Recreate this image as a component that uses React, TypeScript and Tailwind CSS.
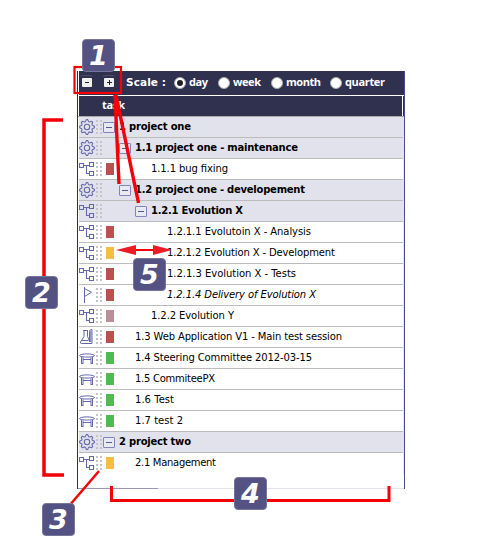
import React from 'react';

type Kind = 'gear' | 'tree' | 'flag' | 'test' | 'table';
type Row = { kind: Kind; level: number; text: string; color?: string; italic?: boolean; width: number };

const RED = '#bb5050';
const GREEN = '#50bb50';
const AMBER = '#f6bd43';

const rows: Row[] = [
  { kind: 'gear', level: 0, text: '1 project one', width: 72 },
  { kind: 'gear', level: 1, text: '1.1 project one - maintenance', width: 163 },
  { kind: 'tree', level: 2, text: '1.1.1 bug fixing', color: RED, width: 77 },
  { kind: 'gear', level: 1, text: '1.2 project one - developement', width: 170 },
  { kind: 'tree', level: 2, text: '1.2.1 Evolution X', width: 92 },
  { kind: 'tree', level: 3, text: '1.2.1.1 Evolutoin X - Analysis', color: RED, width: 144 },
  { kind: 'tree', level: 3, text: '1.2.1.2 Evolution X - Development', color: AMBER, width: 168 },
  { kind: 'tree', level: 3, text: '1.2.1.3 Evolution X - Tests', color: RED, width: 129 },
  { kind: 'flag', level: 3, text: '1.2.1.4 Delivery of Evolution X', color: RED, italic: true, width: 149 },
  { kind: 'tree', level: 2, text: '1.2.2 Evolution Y', color: '#bb9098', width: 83 },
  { kind: 'test', level: 1, text: '1.3 Web Application V1 - Main test session', color: RED, width: 207 },
  { kind: 'table', level: 1, text: '1.4 Steering Committee 2012-03-15', color: GREEN, width: 177 },
  { kind: 'table', level: 1, text: '1.5 CommiteePX', color: GREEN, width: 80 },
  { kind: 'table', level: 1, text: '1.6 Test', color: GREEN, width: 39 },
  { kind: 'table', level: 1, text: '1.7 test 2', color: GREEN, width: 48 },
  { kind: 'gear', level: 0, text: '2 project two', width: 72 },
  { kind: 'tree', level: 1, text: '2.1 Management', color: AMBER, width: 81 },
];

// Horizontal space between the drag handle and the label or its toggle.
const groupIndent = ['-ml-px', 'ml-[15px]', 'ml-[31px]', 'ml-[47px]'];
const leafIndent = ['ml-[5px]', 'ml-[21px]', 'ml-[37px]', 'ml-[53px]'];

const gearPoints = Array.from({ length: 32 }, (_, i) => {
  const r = i % 4 < 2 ? 7.4 : 5.6;
  const a = ((i - 0.5) * Math.PI) / 16 - Math.PI / 2;
  return `${(8 + r * Math.cos(a)).toFixed(2)},${(8 + r * Math.sin(a)).toFixed(2)}`;
}).join(' ');

function KindIcon({ kind }: { kind: Kind }) {
  return (
    <svg className="size-4 shrink-0" viewBox="0 0 16 16" fill="none" stroke="#6668ad" strokeWidth="1">
      {kind === 'gear' && (
        <>
          <polygon points={gearPoints} strokeLinejoin="round" strokeWidth="1.1" />
          <circle cx="8" cy="8" r="2.7" strokeWidth="1.1" />
        </>
      )}
      {kind === 'tree' && (
        <path strokeWidth="1.1" d="M.5 2.500h4v4h-4zM10.500 1.500h4v4h-4zM10.500 10.500h4v4h-4zM5 4.500h5.500M7.500 4.500v8h3" />
      )}
      {kind === 'flag' && <path d="M5.500 0v16M5.500 1.500l7 3.800-7 4.200" />}
      {kind === 'test' && (
        <path d="M4 1.500h5M5 1.500v6l-3.500 5.500q-.5 1.500 1 1.500h10.500M8.500 1.500v6l2.500 5.500M3 11.500h6.500M10.500 13V2.500q0-2 2.500-2v14M11.800 2v11" />
      )}
      {kind === 'table' && (
        <path d="M.5 5.700c0-2.400 15-2.400 15 0 0 1.800-15 1.800-15 0zM2.500 7v7M4 7.500v6.500M13.500 7v7M12 7.500v6.500M4 9.500h8M2.500 13.500h1.500M12 13.500h1.500" />
      )}
    </svg>
  );
}

function Grip() {
  return (
    <svg className="ml-px h-5 w-2 shrink-0" viewBox="0 0 8 20" fill="#c5c5c9">
      {[3, 7, 11, 15].map((y) => (
        <g key={y}>
          <rect x="0" y={y} width="2" height="2" />
          <rect x="4" y={y} width="2" height="2" />
        </g>
      ))}
    </svg>
  );
}

function Label({ text, width, className = '' }: { text: string; width: number; className?: string }) {
  return (
    <svg className={`h-5 shrink-0 overflow-visible ${className}`} width={width} height="20">
      <text x="0" y="13" fill="currentColor" textLength={width}>
        {text}
      </text>
    </svg>
  );
}

function TaskRow({ row }: { row: Row }) {
  const group = !row.color;
  return (
    <div
      className={`flex h-[21px] items-center border-b border-[#bcbcbc] last:border-b-transparent ${
        group ? 'bg-[#e2e2ec] font-bold' : 'bg-white'
      } ${row.italic ? 'italic' : ''}`}
    >
      <KindIcon kind={row.kind} />
      <Grip />
      {group ? (
        <>
          <span
            className={`${groupIndent[row.level]} grid h-[11px] w-3 shrink-0 place-items-center rounded-[1px] border border-[#8284b8] bg-[#e9e9f2]`}
          >
            <span className="h-px w-1.5 bg-[#55578e]" />
          </span>
          <Label text={row.text} width={row.width} className="ml-1" />
        </>
      ) : (
        <>
          <span
            className="ml-0.5 h-3 w-2 shrink-0"
            style={{ backgroundColor: row.color }}
          />
          <Label text={row.text} width={row.width} className={leafIndent[row.level]} />
        </>
      )}
    </div>
  );
}

function Radio({ label, width, checked = false, className = '' }: { label: string; width: number; checked?: boolean; className?: string }) {
  return (
    <span className={`flex items-center ${className}`}>
      <span className="mr-[3px] grid size-3 place-items-center rounded-full border border-[#aaa] bg-white">
        {checked && <span className="size-1.5 rounded-full bg-[#222]" />}
      </span>
      <Label text={label} width={width} />
    </span>
  );
}

function SquareButton({ plus = false }: { plus?: boolean }) {
  return (
    <span className="grid h-[17px] w-[15px] place-items-center rounded-[4px] border border-t-[#4b4b63] border-r-[#30304f] border-b-[#30304f] border-l-[#30304f]">
      <svg className="mb-0.5 h-[9px] w-[10px] rounded-[1px] bg-[#f0f0ee]" viewBox="0 0 10 9" stroke="#222" strokeWidth="1">
        <path d={plus ? 'M3 4.500h5M5.500 2v5' : 'M3 4.500h4'} />
      </svg>
    </span>
  );
}

function Badge({ value, className }: { value: string; className: string }) {
  return (
    <span
      className={`absolute grid size-[33px] place-items-center rounded-[4px] border border-[#77759c] bg-[#545282] font-['DejaVu_Sans',sans-serif] text-[27px] leading-none font-bold text-white italic ${className}`}
    >
      {value}
    </span>
  );
}

export default function App() {
  return (
    <div className="relative h-[553px] w-[502px] overflow-hidden bg-white pt-[71px] pl-[77px] font-['DejaVu_Sans',Verdana,sans-serif] text-[10px] text-black">
      <main className="flex h-[418px] w-[328px] flex-col border-r border-l border-r-[#4b4b88] border-l-[#2e2e4e]">
        <header className="ml-px flex h-6 items-center bg-[#30304f] font-bold text-white">
          <SquareButton />
          <span className="w-[7px]" />
          <SquareButton plus />
          <Label text="Scale :" width={40} className="ml-[10px] text-[10.5px]" />
          <div className="flex font-['Open_Sans','Noto_Sans',sans-serif] text-[11px] font-bold">
            <Radio label="day" width={19} checked className="ml-2" />
            <Radio label="week" width={28} className="ml-[10px]" />
            <Radio label="month" width={35} className="ml-[10px]" />
            <Radio label="quarter" width={40} className="ml-[9px]" />
          </div>
        </header>
        <div className="mt-px ml-px flex h-5 items-center bg-[#30304f] pl-[23px] font-['Open_Sans','Noto_Sans',sans-serif] text-[11px] font-bold text-white">
          <Label text="task" width={23} />
          <span className="mr-px ml-auto h-full w-px bg-white" />
        </div>
        <div className="h-px bg-[#aaa]" />
        <section className="ml-px border-r border-[#e5e5ed]">
          {rows.map((row) => (
            <TaskRow key={row.text} row={row} />
          ))}
        </section>
        <div className="mt-auto flex h-px">
          <span className="w-20 bg-[#9897ba]" />
          <span className="flex-1 bg-[#e2e1ec]" />
        </div>
      </main>

      <svg className="absolute inset-0" width="502" height="553" viewBox="0 0 502 553" fill="none" stroke="#f30008">
        <rect x="74.500" y="67" width="46.500" height="26" strokeWidth="2.200" />
        <path d="M115 95l4 89M116 95l22.500 108" strokeWidth="3.400" />
        <path d="M63 120H44v355h20" strokeWidth="3.500" />
        <path d="M99 471l-30 35" strokeWidth="2.500" />
        <path d="M111.500 486v14.500h277.500V486" strokeWidth="3" />
        <path d="M130 250h29" strokeWidth="2" />
        <path d="M116 250l20-5v10zM172 250l-19-5v10z" fill="#ed1c24" stroke="none" />
      </svg>
      <Badge value="1" className="top-[39px] left-[82px]" />
      <Badge value="2" className="top-[276px] left-[25px]" />
      <Badge value="3" className="top-[503px] left-[42px]" />
      <Badge value="4" className="top-[477px] left-[234px]" />
      <Badge value="5" className="top-[258px] left-[133px]" />
    </div>
  );
}
